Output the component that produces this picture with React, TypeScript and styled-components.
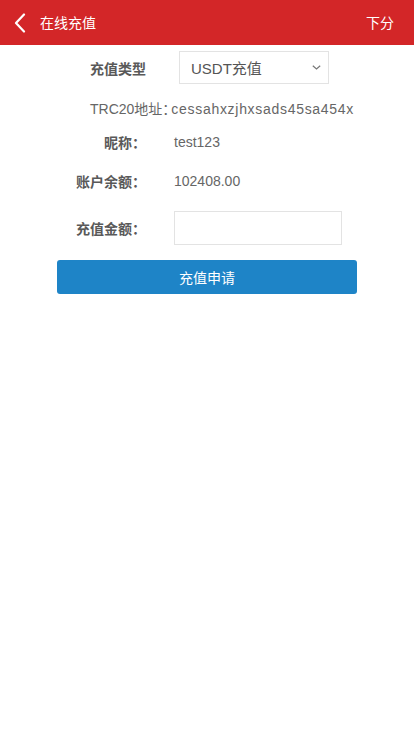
import React from 'react'
import styled, { createGlobalStyle } from 'styled-components'

const GlobalStyle = createGlobalStyle`
  html, body {
    margin: 0;
    padding: 0;
    background: #fff;
  }
  body {
    font-family: "Liberation Sans", "Noto Sans CJK SC", Arial, sans-serif;
  }
`

const App: React.FC = () => {
  return (
    <StyledPage>
      <GlobalStyle />
      <StyledHeader>
        <StyledBack>
          <svg width="12" height="20" viewBox="0 0 12 20">
            <path d="M10 1.5 L2 10 L10 18.5" fill="none" stroke="#fff" strokeWidth="2.2" strokeLinecap="round" strokeLinejoin="round" />
          </svg>
        </StyledBack>
        <StyledTitle>在线充值</StyledTitle>
        <StyledHeaderLink>下分</StyledHeaderLink>
      </StyledHeader>

      <StyledForm>
        <StyledRow height={33} gap={33}>
          <StyledLabel>充值类型</StyledLabel>
          <StyledSelect>
            <span>USDT充值</span>
            <svg width="9" height="5" viewBox="0 0 9 5">
              <path d="M0.8 0.8 L4.5 4 L8.2 0.8" fill="none" stroke="#777" strokeWidth="1.2" />
            </svg>
          </StyledSelect>
        </StyledRow>

        <StyledAddress>
          TRC20地址：<StyledHash>cessahxzjhxsads45sa454x</StyledHash>
        </StyledAddress>

        <StyledRow height={20} gap={28} top={14}>
          <StyledLabel>昵称：</StyledLabel>
          <StyledValue>test123</StyledValue>
        </StyledRow>

        <StyledRow height={20} gap={28} top={19}>
          <StyledLabel>账户余额：</StyledLabel>
          <StyledValue>102408.00</StyledValue>
        </StyledRow>

        <StyledRow height={34} gap={28} top={20}>
          <StyledLabel>充值金额：</StyledLabel>
          <StyledInput type="text" />
        </StyledRow>

        <StyledButton>充值申请</StyledButton>
      </StyledForm>
    </StyledPage>
  )
}

const StyledPage = styled.div`
  width: 414px;
  min-height: 736px;
  background: #fff;
`

const StyledHeader = styled.header`
  height: 45px;
  background: #d32628;
  display: flex;
  align-items: center;
  color: #fff;
  padding: 0 20px 0 14px;
  box-sizing: border-box;
`

const StyledBack = styled.div`
  display: flex;
  align-items: center;
  width: 26px;
`

const StyledTitle = styled.div`
  flex: 1;
  font-size: 14px;
  font-family: "Noto Sans CJK SC", sans-serif;
  margin-top: -1px;
`

const StyledHeaderLink = styled.div`
  font-size: 14px;
  font-family: "Noto Sans CJK SC", sans-serif;
  margin-top: -1px;
`

const StyledForm = styled.div`
  display: flex;
  flex-direction: column;
  padding-top: 6px;
`

const StyledRow = styled.div<{ height: number; gap: number; top?: number }>`
  display: grid;
  grid-template-columns: 146px auto;
  column-gap: ${(p) => p.gap}px;
  align-items: center;
  height: ${(p) => p.height}px;
  margin-top: ${(p) => p.top || 0}px;
`

const StyledLabel = styled.div`
  text-align: right;
  font-size: 14px;
  font-weight: bold;
  color: #595959;
  font-family: "Noto Sans CJK SC", sans-serif;
`

const StyledValue = styled.div`
  font-size: 14px;
  color: #666;
`

const StyledSelect = styled.div`
  width: 150px;
  height: 33px;
  box-sizing: border-box;
  border: 1px solid #e3e3e3;
  display: flex;
  align-items: center;
  justify-content: space-between;
  padding: 0 7px 0 11px;
  font-size: 15px;
  color: #555;
`

const StyledAddress = styled.div`
  margin-top: 16px;
  padding-left: 90px;
  font-size: 14px;
  color: #666;
  height: 18px;
  line-height: 18px;
`

const StyledHash = styled.span`
  margin-left: -5px;
  letter-spacing: 0.7px;
`

const StyledInput = styled.input`
  width: 168px;
  height: 34px;
  box-sizing: border-box;
  border: 1px solid #e3e3e3;
  outline: none;
  font-size: 14px;
  padding: 0 8px;
`

const StyledButton = styled.button`
  margin: 15px 0 0 57px;
  width: 300px;
  height: 34px;
  border: none;
  border-radius: 3px;
  background: #1e84c7;
  color: #fff;
  font-size: 14px;
  font-family: "Noto Sans CJK SC", sans-serif;
  cursor: pointer;
`

export default App
